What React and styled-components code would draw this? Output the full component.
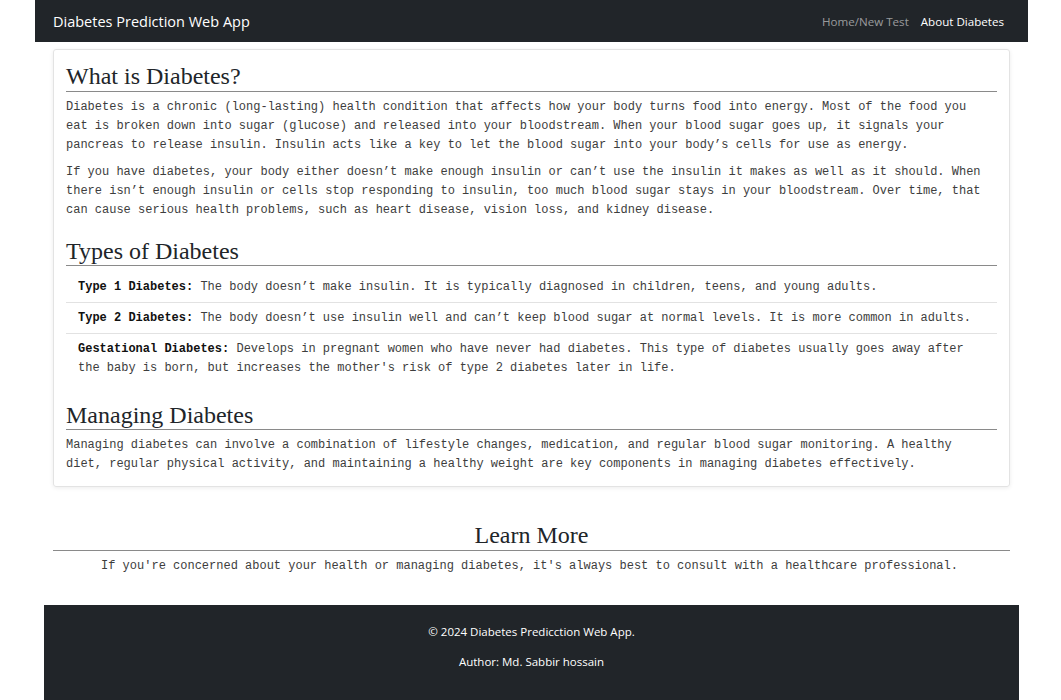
import React from 'react'
import styled, { createGlobalStyle } from 'styled-components'

const GlobalStyle = createGlobalStyle`
  body {
    margin: 0;
    background: #fff;
    font-family: "Open Sans", "Noto Sans", sans-serif;
  }
`

const Page = styled.div`
  width: 993px;
  margin: 0 0 0 35px;
`

const Navbar = styled.nav`
  height: 42px;
  background: #212529;
  display: flex;
  align-items: center;
  justify-content: space-between;
  padding: 0 24px 0 18px;
`

const Brand = styled.a`
  color: #fff;
  font-size: 14.5px;
  text-decoration: none;
`

const NavLinks = styled.div`
  display: flex;
  gap: 12px;
`

const NavLink = styled.a`
  color: ${({ active }) => (active ? '#fff' : 'rgba(255, 255, 255, 0.55)')};
  font-size: 11.6px;
  text-decoration: none;
`

const Main = styled.main`
  padding: 0 18px;
`

const Card = styled.section`
  margin-top: 7px;
  border: 1px solid #e3e3e3;
  border-radius: 3px;
  box-shadow: 0 1px 4px rgba(0, 0, 0, 0.08);
  padding: 12px;
`

const Heading = styled.h2`
  font-family: "Liberation Serif", "Times New Roman", serif;
  font-weight: 400;
  font-size: 24px;
  line-height: 28px;
  color: #212529;
  margin: 17px 0 6px;
  border-bottom: 1px solid #8a8a8a;
  text-align: ${({ center }) => (center ? 'center' : 'left')};

  &:first-child {
    margin-top: 0;
    line-height: 29px;
  }
`

const Text = styled.p`
  font-family: "Liberation Mono", "Courier New", monospace;
  font-size: 12px;
  line-height: 19px;
  color: #3d3d3d;
  margin: 0 0 8px;
  padding-right: 4px;
  text-align: ${({ center }) => (center ? 'center' : 'left')};

  &:last-child {
    margin-bottom: 0;
  }
`

const TypeList = styled.ul`
  list-style: none;
  margin: 0 0 18px;
  padding: 0;
`

const TypeItem = styled.li`
  font-family: "Liberation Mono", "Courier New", monospace;
  font-size: 12px;
  line-height: 19px;
  color: #3d3d3d;
  padding: 5.5px 12px;
  border-bottom: 1px solid #e2e2e2;

  &:last-child {
    border-bottom: none;
  }

  b {
    color: #111;
  }
`

const LearnMore = styled.section`
  margin-top: 34px;
`

const Footer = styled.footer`
  margin: 29px 9px 0;
  background: #212529;
  padding: 17px 0 24px;
  text-align: center;
  color: #fff;
  font-size: 11.5px;
  height: 95px;
  box-sizing: border-box;
`

const FooterLine = styled.p`
  margin: 0 0 11px;
  line-height: 19px;
`

const types = [
  {
    name: 'Type 1 Diabetes:',
    text: 'The body doesn’t make insulin. It is typically diagnosed in children, teens, and young adults.',
  },
  {
    name: 'Type 2 Diabetes:',
    text: 'The body doesn’t use insulin well and can’t keep blood sugar at normal levels. It is more common in adults.',
  },
  {
    name: 'Gestational Diabetes:',
    text: "Develops in pregnant women who have never had diabetes. This type of diabetes usually goes away after the baby is born, but increases the mother's risk of type 2 diabetes later in life.",
  },
]

export default function App() {
  return (
    <Page>
      <GlobalStyle />
      <Navbar>
        <Brand href="#">Diabetes Prediction Web App</Brand>
        <NavLinks>
          <NavLink href="#">Home/New Test</NavLink>
          <NavLink href="#" active>
            About Diabetes
          </NavLink>
        </NavLinks>
      </Navbar>

      <Main>
        <Card>
          <Heading>What is Diabetes?</Heading>
          <Text>
            Diabetes is a chronic (long-lasting) health condition that affects how your body turns
            food into energy. Most of the food you eat is broken down into sugar (glucose) and
            released into your bloodstream. When your blood sugar goes up, it signals your pancreas
            to release insulin. Insulin acts like a key to let the blood sugar into your body’s cells
            for use as energy.
          </Text>
          <Text>
            If you have diabetes, your body either doesn’t make enough insulin or can’t use the
            insulin it makes as well as it should. When there isn’t enough insulin or cells stop
            responding to insulin, too much blood sugar stays in your bloodstream. Over time, that
            can cause serious health problems, such as heart disease, vision loss, and kidney
            disease.
          </Text>

          <Heading>Types of Diabetes</Heading>
          <TypeList>
            {types.map(t => (
              <TypeItem key={t.name}>
                <b>{t.name}</b> {t.text}
              </TypeItem>
            ))}
          </TypeList>

          <Heading>Managing Diabetes</Heading>
          <Text>
            Managing diabetes can involve a combination of lifestyle changes, medication, and
            regular blood sugar monitoring. A healthy diet, regular physical activity, and
            maintaining a healthy weight are key components in managing diabetes effectively.
          </Text>
        </Card>

        <LearnMore>
          <Heading center>Learn More</Heading>
          <Text center>
            If you're concerned about your health or managing diabetes, it's always best to consult
            with a healthcare professional.
          </Text>
        </LearnMore>
      </Main>

      <Footer>
        <FooterLine>© 2024 Diabetes Predicction Web App.</FooterLine>
        <FooterLine>Author: Md. Sabbir hossain</FooterLine>
      </Footer>
    </Page>
  )
}
